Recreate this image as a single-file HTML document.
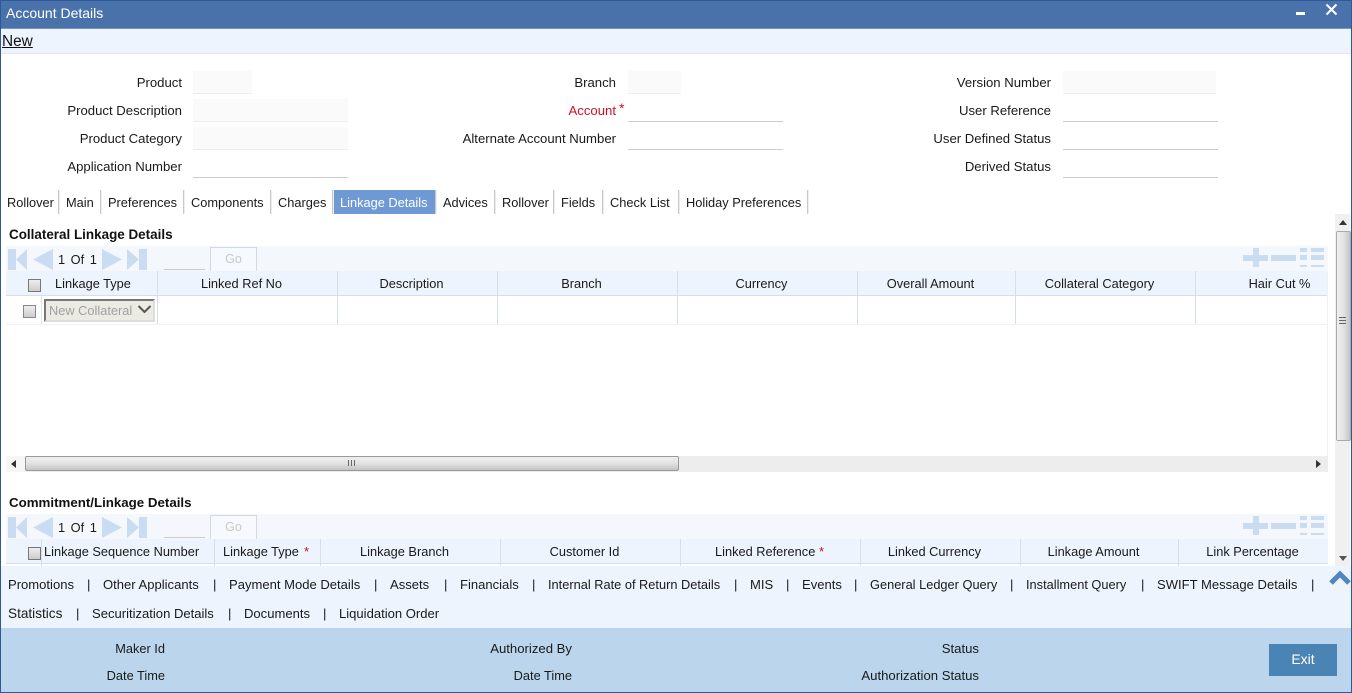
<!DOCTYPE html>
<html><head><meta charset="utf-8"><style>
html,body{margin:0;padding:0;background:#fff}
body{width:1352px;height:693px;overflow:hidden;position:relative;font-family:"Liberation Sans",Arial,sans-serif;font-size:13.15px;color:#1a1a1a}
.a,.t,.r,.c{position:absolute}
.t,.r,.c{white-space:nowrap;line-height:16px;margin-top:1px}
.r{text-align:right}
.c{text-align:center}
.k{font-size:12.8px}
.l{font-size:13.05px}
.b{font-weight:bold;color:#111;font-size:13.45px}
.f{position:absolute;background:#fafafa;border-bottom:1px solid #eee}
.u{position:absolute;border-bottom:1px solid #ccc}
.s{position:absolute;width:1px;height:24px;top:190px;background:#c8c8c8;box-shadow:1px 0 0 #eee}
.v{position:absolute;width:1px;background:#d5dfec}
</style></head><body>
<!-- frame -->
<div class="a" style="left:0;top:0;width:1352px;height:29px;background:#4a72aa"></div>
<div class="a" style="left:0;top:0;width:1352px;height:1px;background:#2f5897"></div>
<div class="a" style="left:0;top:28px;width:1352px;height:1px;background:#7d95b3"></div>
<div class="t" style="left:6px;top:4px;color:#fff;font-size:14px">Account Details</div>
<div class="a" style="left:1296px;top:12px;width:9px;height:3px;background:#fff"></div>
<svg class="a" style="left:1325px;top:3px" width="13" height="13"><path d="M1.500 1.500L11.500 11.500M11.500 1.500L1.500 11.500" stroke="#fff" stroke-width="2"/></svg>
<div class="a" style="left:0;top:29px;width:1352px;height:24px;background:#edf4fd"></div>
<div class="a" style="left:0;top:53px;width:1352px;height:1px;background:#e4e8ee"></div>
<div class="t" style="left:2px;top:32px;font-size:15.4px;line-height:18px;text-decoration:underline;color:#111">New</div>

<!-- form -->
<div class="r" style="right:1170px;top:74px">Product</div>
<div class="r" style="right:1170px;top:102px">Product Description</div>
<div class="r" style="right:1170px;top:130px">Product Category</div>
<div class="r" style="right:1170px;top:158px">Application Number</div>
<div class="f" style="left:193px;top:71px;width:59px;height:22px"></div>
<div class="f" style="left:193px;top:99px;width:155px;height:22px"></div>
<div class="f" style="left:193px;top:127px;width:155px;height:22px"></div>
<div class="u" style="left:193px;top:155px;width:155px;height:22px"></div>

<div class="r" style="right:736px;top:74px">Branch</div>
<div class="r" style="right:736px;top:102px;color:#d01020">Account</div>
<div class="t" style="left:619px;top:99px;color:#d01020;font-size:14px">*</div>
<div class="r" style="right:736px;top:130px">Alternate Account Number</div>
<div class="f" style="left:628px;top:71px;width:53px;height:22px"></div>
<div class="u" style="left:628px;top:99px;width:155px;height:22px"></div>
<div class="u" style="left:628px;top:127px;width:155px;height:22px"></div>

<div class="r" style="right:301px;top:74px">Version Number</div>
<div class="r" style="right:301px;top:102px">User Reference</div>
<div class="r" style="right:301px;top:130px">User Defined Status</div>
<div class="r" style="right:301px;top:158px">Derived Status</div>
<div class="f" style="left:1063px;top:71px;width:153px;height:22px"></div>
<div class="u" style="left:1063px;top:99px;width:155px;height:22px"></div>
<div class="u" style="left:1063px;top:127px;width:155px;height:22px"></div>
<div class="u" style="left:1063px;top:155px;width:155px;height:22px"></div>

<!-- tabs -->
<div class="a" style="left:334px;top:190px;width:101px;height:24px;background:#6e99d4"></div>
<div class="t k" style="left:7px;top:194px">Rollover</div>
<div class="t k" style="left:66px;top:194px">Main</div>
<div class="t k" style="left:108px;top:194px">Preferences</div>
<div class="t k" style="left:191px;top:194px">Components</div>
<div class="t k" style="left:278px;top:194px">Charges</div>
<div class="t k" style="left:340px;top:194px;color:#fff">Linkage Details</div>
<div class="t k" style="left:443px;top:194px">Advices</div>
<div class="t k" style="left:502px;top:194px">Rollover</div>
<div class="t k" style="left:561px;top:194px">Fields</div>
<div class="t k" style="left:610px;top:194px">Check List</div>
<div class="t k" style="left:686px;top:194px">Holiday Preferences</div>
<div class="s" style="left:58px"></div><div class="s" style="left:100px"></div><div class="s" style="left:183px"></div><div class="s" style="left:270px"></div><div class="s" style="left:332px"></div><div class="s" style="left:435px"></div><div class="s" style="left:494px"></div><div class="s" style="left:553px"></div><div class="s" style="left:602px"></div><div class="s" style="left:678px"></div><div class="s" style="left:807px"></div>

<!-- collateral section -->
<div class="t b" style="left:9px;top:226px">Collateral Linkage Details</div>
<div class="a" style="left:6px;top:246px;width:1322px;height:25px;background:#f4f8fd"></div>
<svg class="a" style="left:8px;top:249px" width="140" height="21" fill="#cadcf1"><path d="M0 0H8V21H0ZM8 10.500L19 0V21ZM25 10.500L45 0V21ZM94 0L114 10.500L94 21ZM119 0L131 10.500V0H139V21H131V10.500L119 21Z"/></svg>
<div class="t k" style="left:58px;top:251px;word-spacing:2px">1 Of 1</div>
<div class="a" style="left:164px;top:269px;width:41px;height:1px;background:#ccc"></div>
<div class="a" style="left:210px;top:247px;width:45px;height:23px;background:#f6f9fd;border:1px solid #d3d9e2;color:#c8c8c8;text-align:center;line-height:23px;font-size:12.5px">Go</div>
<svg class="a" style="left:1243px;top:248px" width="82" height="20" fill="#cadcf1"><path d="M0 7H10V0H16V7H25V13H16V19H10V13H0ZM28 7H53V13H28ZM57 0H64V4H57ZM68 0H81V4H68ZM57 7H64V12H57ZM68 7H81V12H68ZM57 17H64V19H57ZM68 17H81V19H68Z"/></svg>
<div class="a" style="left:6px;top:271px;width:1322px;height:24px;background:#edf4fd;border-bottom:1px solid #d3dfee"></div>
<div class="a" style="left:1327px;top:271px;width:1px;height:185px;background:#f0f0f0"></div>
<div class="a" style="left:6px;top:324px;width:1322px;height:1px;background:#f6efec"></div>
<div class="v" style="left:157px;top:271px;height:53px"></div><div class="v" style="left:337px;top:271px;height:53px"></div><div class="v" style="left:497px;top:271px;height:53px"></div><div class="v" style="left:677px;top:271px;height:53px"></div><div class="v" style="left:857px;top:271px;height:53px"></div><div class="v" style="left:1015px;top:271px;height:53px"></div><div class="v" style="left:1195px;top:271px;height:53px"></div>
<div class="a" style="left:41px;top:296px;width:1px;height:28px;background:#dde5f0"></div>
<div class="a" style="left:28px;top:279px;width:11px;height:11px;border:1px solid #777;background:linear-gradient(#eee,#ccc)"></div>
<div class="a" style="left:23px;top:305px;width:11px;height:11px;border:1px solid #888;background:linear-gradient(#eee,#ccc)"></div>
<div class="t k" style="left:55px;top:275px">Linkage Type</div>
<div class="c k" style="left:158px;top:275px;width:167px">Linked Ref No</div>
<div class="c k" style="left:338px;top:275px;width:147px">Description</div>
<div class="c k" style="left:498px;top:275px;width:167px">Branch</div>
<div class="c k" style="left:678px;top:275px;width:167px">Currency</div>
<div class="c k" style="left:858px;top:275px;width:145px">Overall Amount</div>
<div class="c k" style="left:1016px;top:275px;width:167px">Collateral Category</div>
<div class="c k" style="left:1196px;top:275px;width:167px">Hair Cut %</div>
<div class="a" style="left:44px;top:299px;width:107px;height:19px;border:2px solid;border-color:#777 #ddd #ddd #777;background:#ebebe4;overflow:hidden"></div>
<div class="t k" style="left:49px;top:302px;color:#a0a0a0">New Collateral</div>
<svg class="a" style="left:137px;top:304px" width="15" height="11"><path d="M1.500 2L7.500 8L13.500 2" fill="none" stroke="#555" stroke-width="2"/></svg>

<!-- h scrollbar -->
<div class="a" style="left:6px;top:456px;width:1322px;height:16px;background:#ededed"></div>
<div class="a" style="left:6px;top:456px;width:19px;height:16px;background:#f6f6f6"></div>
<div class="a" style="left:25px;top:456px;width:652px;height:13px;border:1px solid #999;border-radius:2px;background:linear-gradient(#efefef,#e2e2e2 50%,#c4c4c4)"></div>
<div class="a" style="left:348px;top:460px;width:7px;height:6px;background:repeating-linear-gradient(90deg,#666 0 1px,transparent 1px 3px)"></div>
<svg class="a" style="left:11px;top:460px" width="6" height="8"><path d="M5 0V8L0 4Z" fill="#333"/></svg>
<svg class="a" style="left:1316px;top:460px" width="6" height="8"><path d="M0 0V8L5 4Z" fill="#333"/></svg>

<!-- commitment section -->
<div class="t b" style="left:9px;top:494px;font-size:13.3px">Commitment/Linkage Details</div>
<div class="a" style="left:6px;top:514px;width:1322px;height:25px;background:#f4f8fd"></div>
<svg class="a" style="left:8px;top:517px" width="140" height="21" fill="#cadcf1"><path d="M0 0H8V21H0ZM8 10.500L19 0V21ZM25 10.500L45 0V21ZM94 0L114 10.500L94 21ZM119 0L131 10.500V0H139V21H131V10.500L119 21Z"/></svg>
<div class="t k" style="left:58px;top:519px;word-spacing:2px">1 Of 1</div>
<div class="a" style="left:164px;top:537px;width:41px;height:1px;background:#ccc"></div>
<div class="a" style="left:210px;top:515px;width:45px;height:23px;background:#f6f9fd;border:1px solid #d3d9e2;color:#c8c8c8;text-align:center;line-height:23px;font-size:12.5px">Go</div>
<svg class="a" style="left:1243px;top:516px" width="82" height="20" fill="#cadcf1"><path d="M0 7H10V0H16V7H25V13H16V19H10V13H0ZM28 7H53V13H28ZM57 0H64V4H57ZM68 0H81V4H68ZM57 7H64V12H57ZM68 7H81V12H68ZM57 17H64V19H57ZM68 17H81V19H68Z"/></svg>
<div class="a" style="left:6px;top:539px;width:1322px;height:24px;background:#edf4fd;border-bottom:1px solid #d3dfee"></div>
<div class="v" style="left:41px;top:539px;height:27px"></div><div class="v" style="left:214px;top:539px;height:27px"></div><div class="v" style="left:320px;top:539px;height:27px"></div><div class="v" style="left:500px;top:539px;height:27px"></div><div class="v" style="left:680px;top:539px;height:27px"></div><div class="v" style="left:860px;top:539px;height:27px"></div><div class="v" style="left:1020px;top:539px;height:27px"></div><div class="v" style="left:1178px;top:539px;height:27px"></div>
<div class="a" style="left:28px;top:547px;width:11px;height:11px;border:1px solid #777;background:linear-gradient(#eee,#ccc)"></div>
<div class="t k" style="left:44px;top:543px">Linkage Sequence Number</div>
<div class="t k" style="left:223px;top:543px">Linkage Type</div>
<div class="t" style="left:304px;top:543px;color:#d01020">*</div>
<div class="c k" style="left:321px;top:543px;width:167px">Linkage Branch</div>
<div class="c k" style="left:501px;top:543px;width:167px">Customer Id</div>
<div class="t k" style="left:715px;top:543px">Linked Reference</div>
<div class="t" style="left:819px;top:543px;color:#d01020">*</div>
<div class="c k" style="left:861px;top:543px;width:147px">Linked Currency</div>
<div class="c k" style="left:1021px;top:543px;width:145px">Linkage Amount</div>
<div class="c k" style="left:1179px;top:543px;width:147px">Link Percentage</div>

<!-- v scrollbar -->
<div class="a" style="left:1335px;top:214px;width:15px;height:352px;background:#f0f0f0"></div>
<div class="a" style="left:1336px;top:231px;width:13px;height:208px;border:1px solid #aaa;border-radius:2px;background:linear-gradient(90deg,#f0f0f0,#e2e2e2 50%,#c4c4c4)"></div>
<div class="a" style="left:1339px;top:317px;width:7px;height:7px;background:repeating-linear-gradient(#666 0 1px,transparent 1px 3px)"></div>
<svg class="a" style="left:1339px;top:220px" width="8" height="6"><path d="M0 5H8L4 0Z" fill="#333"/></svg>
<svg class="a" style="left:1339px;top:556px" width="8" height="6"><path d="M0 0H8L4 5Z" fill="#555"/></svg>

<!-- links bar -->
<div class="a" style="left:0;top:566px;width:1352px;height:62px;background:#edf4fd"></div>
<div class="t l" style="left:8px;top:576px">Promotions</div><div class="t" style="left:87px;top:576px">|</div>
<div class="t l" style="left:103px;top:576px">Other Applicants</div><div class="t" style="left:213px;top:576px">|</div>
<div class="t l" style="left:229px;top:576px">Payment Mode Details</div><div class="t" style="left:374px;top:576px">|</div>
<div class="t l" style="left:390px;top:576px">Assets</div><div class="t" style="left:444px;top:576px">|</div>
<div class="t l" style="left:460px;top:576px">Financials</div><div class="t" style="left:532px;top:576px">|</div>
<div class="t k" style="left:548px;top:576px">Internal Rate of Return Details</div><div class="t" style="left:734px;top:576px">|</div>
<div class="t l" style="left:750px;top:576px">MIS</div><div class="t" style="left:786px;top:576px">|</div>
<div class="t l" style="left:802px;top:576px">Events</div><div class="t" style="left:854px;top:576px">|</div>
<div class="t k" style="left:870px;top:576px">General Ledger Query</div><div class="t" style="left:1010px;top:576px">|</div>
<div class="t k" style="left:1026px;top:576px">Installment Query</div><div class="t" style="left:1141px;top:576px">|</div>
<div class="t l" style="left:1157px;top:576px">SWIFT Message Details</div><div class="t" style="left:1311px;top:576px">|</div>
<div class="t" style="left:8px;top:605px;font-size:13.6px">Statistics</div><div class="t" style="left:76px;top:605px">|</div>
<div class="t l" style="left:92px;top:605px">Securitization Details</div><div class="t" style="left:228px;top:605px">|</div>
<div class="t l" style="left:244px;top:605px">Documents</div><div class="t" style="left:323px;top:605px">|</div>
<div class="t l" style="left:339px;top:605px">Liquidation Order</div>
<svg class="a" style="left:1328px;top:570px" width="24" height="17"><path d="M3 13L12 4L21 13" fill="none" stroke="#4f86bc" stroke-width="5"/></svg>

<!-- footer -->
<div class="a" style="left:0;top:628px;width:1352px;height:64px;background:#bbd6ec"></div>
<div class="r k" style="right:1187px;top:640px">Maker Id</div>
<div class="r k" style="right:1187px;top:667px">Date Time</div>
<div class="r" style="right:780px;top:640px">Authorized By</div>
<div class="r k" style="right:780px;top:667px">Date Time</div>
<div class="r" style="right:373px;top:640px">Status</div>
<div class="r" style="right:373px;top:667px">Authorization Status</div>
<div class="a" style="left:1269px;top:644px;width:68px;height:32px;background:#4a84b4;color:#fff;text-align:center;line-height:31px;font-size:14px">Exit</div>

<!-- outer border -->
<div class="a" style="left:0;top:0;width:1px;height:693px;background:#2f5897"></div>
<div class="a" style="left:1351px;top:0;width:1px;height:693px;background:#2f5897"></div>
<div class="a" style="left:0;top:692px;width:1352px;height:1px;background:#2f5897"></div>
</body></html>
